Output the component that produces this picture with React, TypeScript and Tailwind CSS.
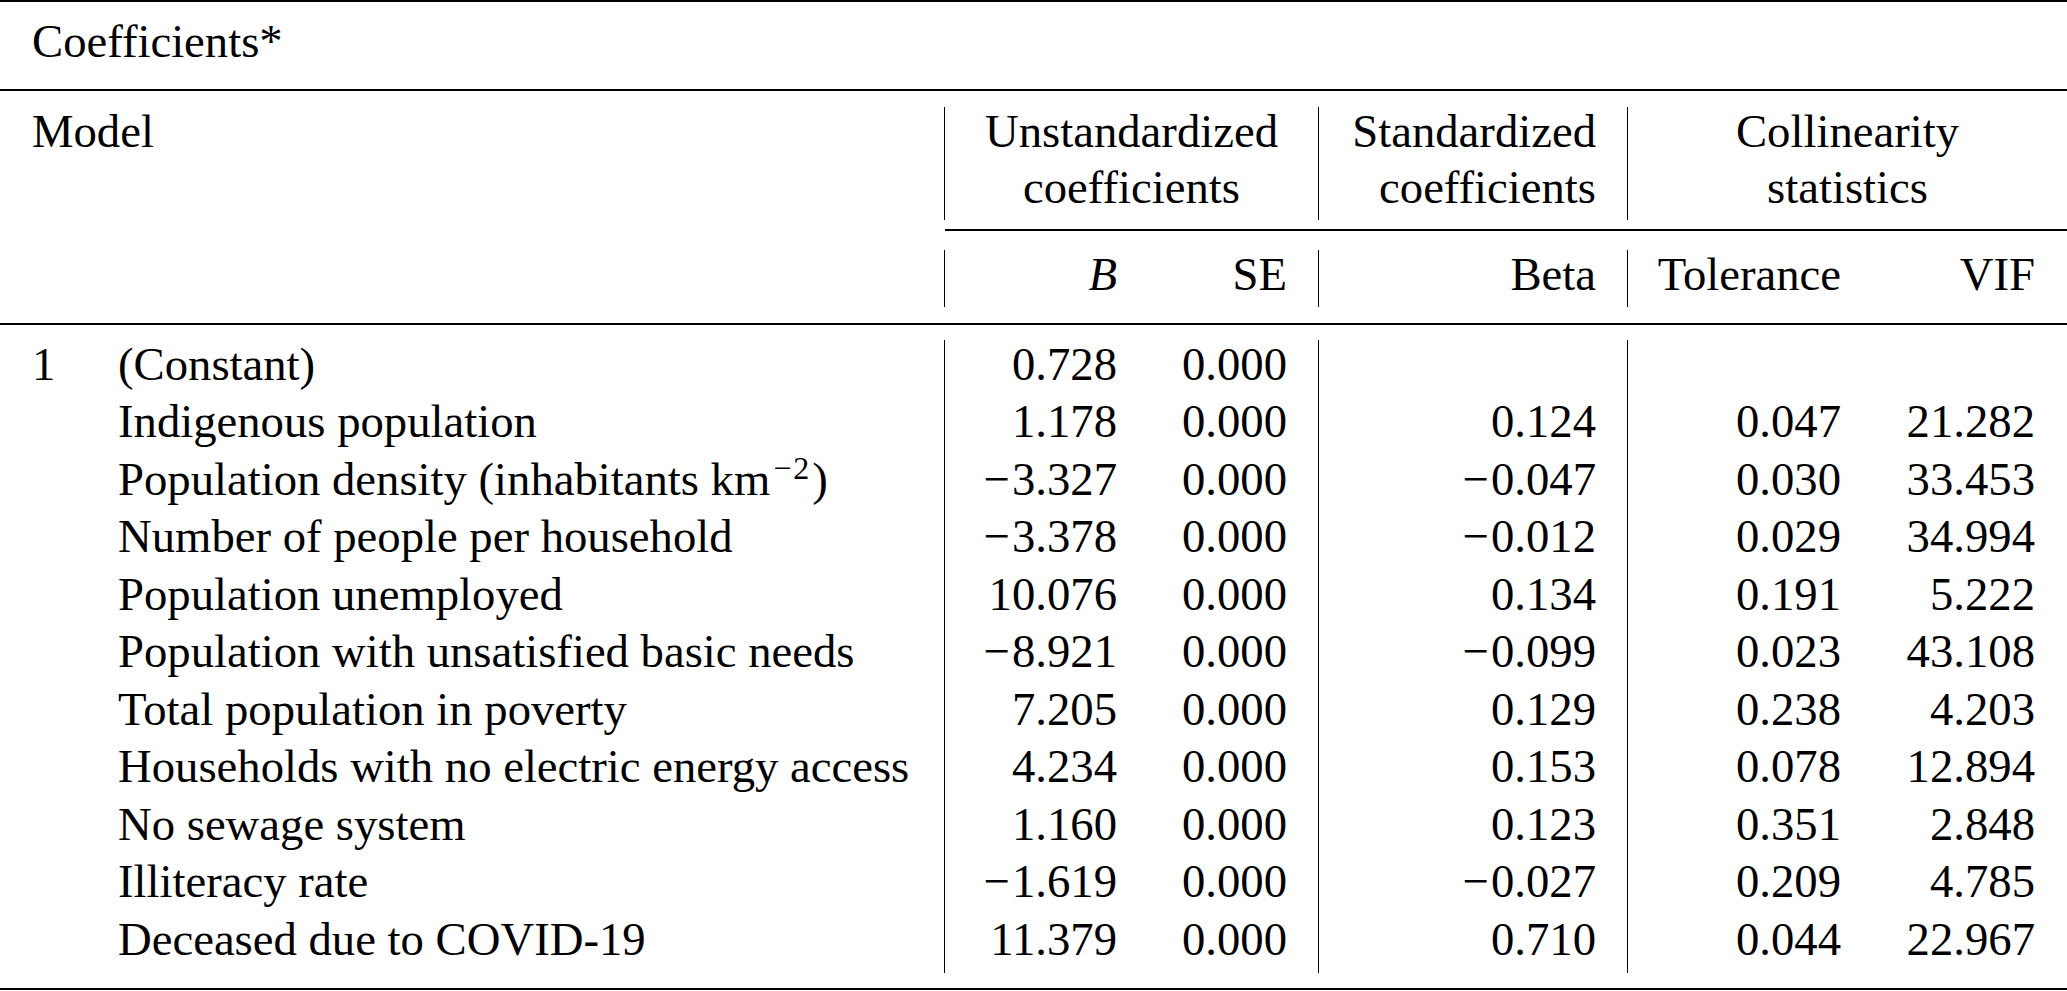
import React from "react";

type Row = {
  n: string;
  label: React.ReactNode;
  b: string;
  se: string;
  beta: string;
  tol: string;
  vif: string;
};

const rows: Row[] = [
  { n: "1", label: "(Constant)", b: "0.728", se: "0.000", beta: "", tol: "", vif: "" },
  { n: "", label: "Indigenous population", b: "1.178", se: "0.000", beta: "0.124", tol: "0.047", vif: "21.282" },
  {
    n: "",
    label: (
      <>
        Population density (inhabitants km
        <sup className="text-[32px]">
          <span className="ml-[3px] mr-[2px]">−</span>2
        </sup>
        <span className="ml-[3px]">)</span>
      </>
    ),
    b: "−3.327",
    se: "0.000",
    beta: "−0.047",
    tol: "0.030",
    vif: "33.453",
  },
  { n: "", label: "Number of people per household", b: "−3.378", se: "0.000", beta: "−0.012", tol: "0.029", vif: "34.994" },
  { n: "", label: "Population unemployed", b: "10.076", se: "0.000", beta: "0.134", tol: "0.191", vif: "5.222" },
  { n: "", label: "Population with unsatisfied basic needs", b: "−8.921", se: "0.000", beta: "−0.099", tol: "0.023", vif: "43.108" },
  { n: "", label: "Total population in poverty", b: "7.205", se: "0.000", beta: "0.129", tol: "0.238", vif: "4.203" },
  { n: "", label: "Households with no electric energy access", b: "4.234", se: "0.000", beta: "0.153", tol: "0.078", vif: "12.894" },
  { n: "", label: "No sewage system", b: "1.160", se: "0.000", beta: "0.123", tol: "0.351", vif: "2.848" },
  { n: "", label: "Illiteracy rate", b: "−1.619", se: "0.000", beta: "−0.027", tol: "0.209", vif: "4.785" },
  { n: "", label: "Deceased due to COVID-19", b: "11.379", se: "0.000", beta: "0.710", tol: "0.044", vif: "22.967" },
];

function Num({ v }: { v: string }) {
  if (v.startsWith("−")) {
    return (
      <>
        <span className="mr-[2px]">−</span>
        {v.slice(1)}
      </>
    );
  }
  return <>{v}</>;
}

function Col({
  cells,
  className,
}: {
  cells: React.ReactNode[];
  className: string;
}) {
  return (
    <div className={className}>
      <div className="-mt-[4.5px] leading-[57.5px]">
        {cells.map((c, i) => (
          <div key={i} className="h-[57.5px] whitespace-nowrap">
            {c}
          </div>
        ))}
      </div>
    </div>
  );
}

export default function App() {
  return (
    <div className="min-h-screen bg-white">
      <div className="w-[2067px] bg-white text-black font-['Liberation_Serif',serif] text-[46.7px]">
        <div className="h-[2px] bg-black" />
        <div className="h-[87px] pl-[32px] pt-[10.5px] leading-[57.5px] whitespace-nowrap">
          Coefficients*
        </div>
        <div className="h-[2px] bg-black" />

        {/* header band 1 */}
        <div className="flex h-[138px] pt-[16px] pb-[9px] leading-[56px]">
          <div className="w-[944px] pl-[32px]">
            <div className="-mt-[3.75px]">Model</div>
          </div>
          <div className="w-[374px] border-l border-black text-center">
            <div className="-mt-[3.75px]">
              Unstandardized
              <br />
              coefficients
            </div>
          </div>
          <div className="w-[309px] border-l border-black pr-[31px] text-right">
            <div className="-mt-[3.75px]">
              Standardized
              <br />
              coefficients
            </div>
          </div>
          <div className="flex-1 border-l border-black text-center">
            <div className="-mt-[3.75px]">
              Collinearity
              <br />
              statistics
            </div>
          </div>
        </div>

        {/* cmidrule */}
        <div className="flex h-[2px]">
          <div className="w-[945px]" />
          <div className="flex-1 bg-black" />
        </div>

        {/* header band 2 */}
        <div className="flex h-[92px] pt-[19px] pb-[16px] leading-[57.5px]">
          <div className="w-[944px]" />
          <div className="w-[205px] border-l border-black pr-[32px] text-right">
            <div className="-mt-[4.5px] italic">B</div>
          </div>
          <div className="w-[169px] pr-[31px] text-right">
            <div className="-mt-[4.5px]">SE</div>
          </div>
          <div className="w-[309px] border-l border-black pr-[31px] text-right">
            <div className="-mt-[4.5px]">Beta</div>
          </div>
          <div className="w-[246px] border-l border-black pr-[32px] text-right">
            <div className="-mt-[4.5px]">Tolerance</div>
          </div>
          <div className="flex-1 pr-[32px] text-right">
            <div className="-mt-[4.5px]">VIF</div>
          </div>
        </div>

        <div className="h-[2px] bg-black" />

        {/* body */}
        <div className="flex h-[663px] py-[15px]">
          <Col className="w-[86px] pl-[32px]" cells={rows.map((r) => r.n)} />
          <Col className="w-[858px] pl-[32px]" cells={rows.map((r) => r.label)} />
          <Col
            className="w-[205px] border-l border-black pr-[32px] text-right"
            cells={rows.map((r) => <Num v={r.b} />)}
          />
          <Col className="w-[169px] pr-[31px] text-right" cells={rows.map((r) => <Num v={r.se} />)} />
          <Col
            className="w-[309px] border-l border-black pr-[31px] text-right"
            cells={rows.map((r) => <Num v={r.beta} />)}
          />
          <Col
            className="w-[246px] border-l border-black pr-[32px] text-right"
            cells={rows.map((r) => <Num v={r.tol} />)}
          />
          <Col className="flex-1 pr-[32px] text-right" cells={rows.map((r) => <Num v={r.vif} />)} />
        </div>

        <div className="h-[2px] bg-black" />
      </div>
    </div>
  );
}
